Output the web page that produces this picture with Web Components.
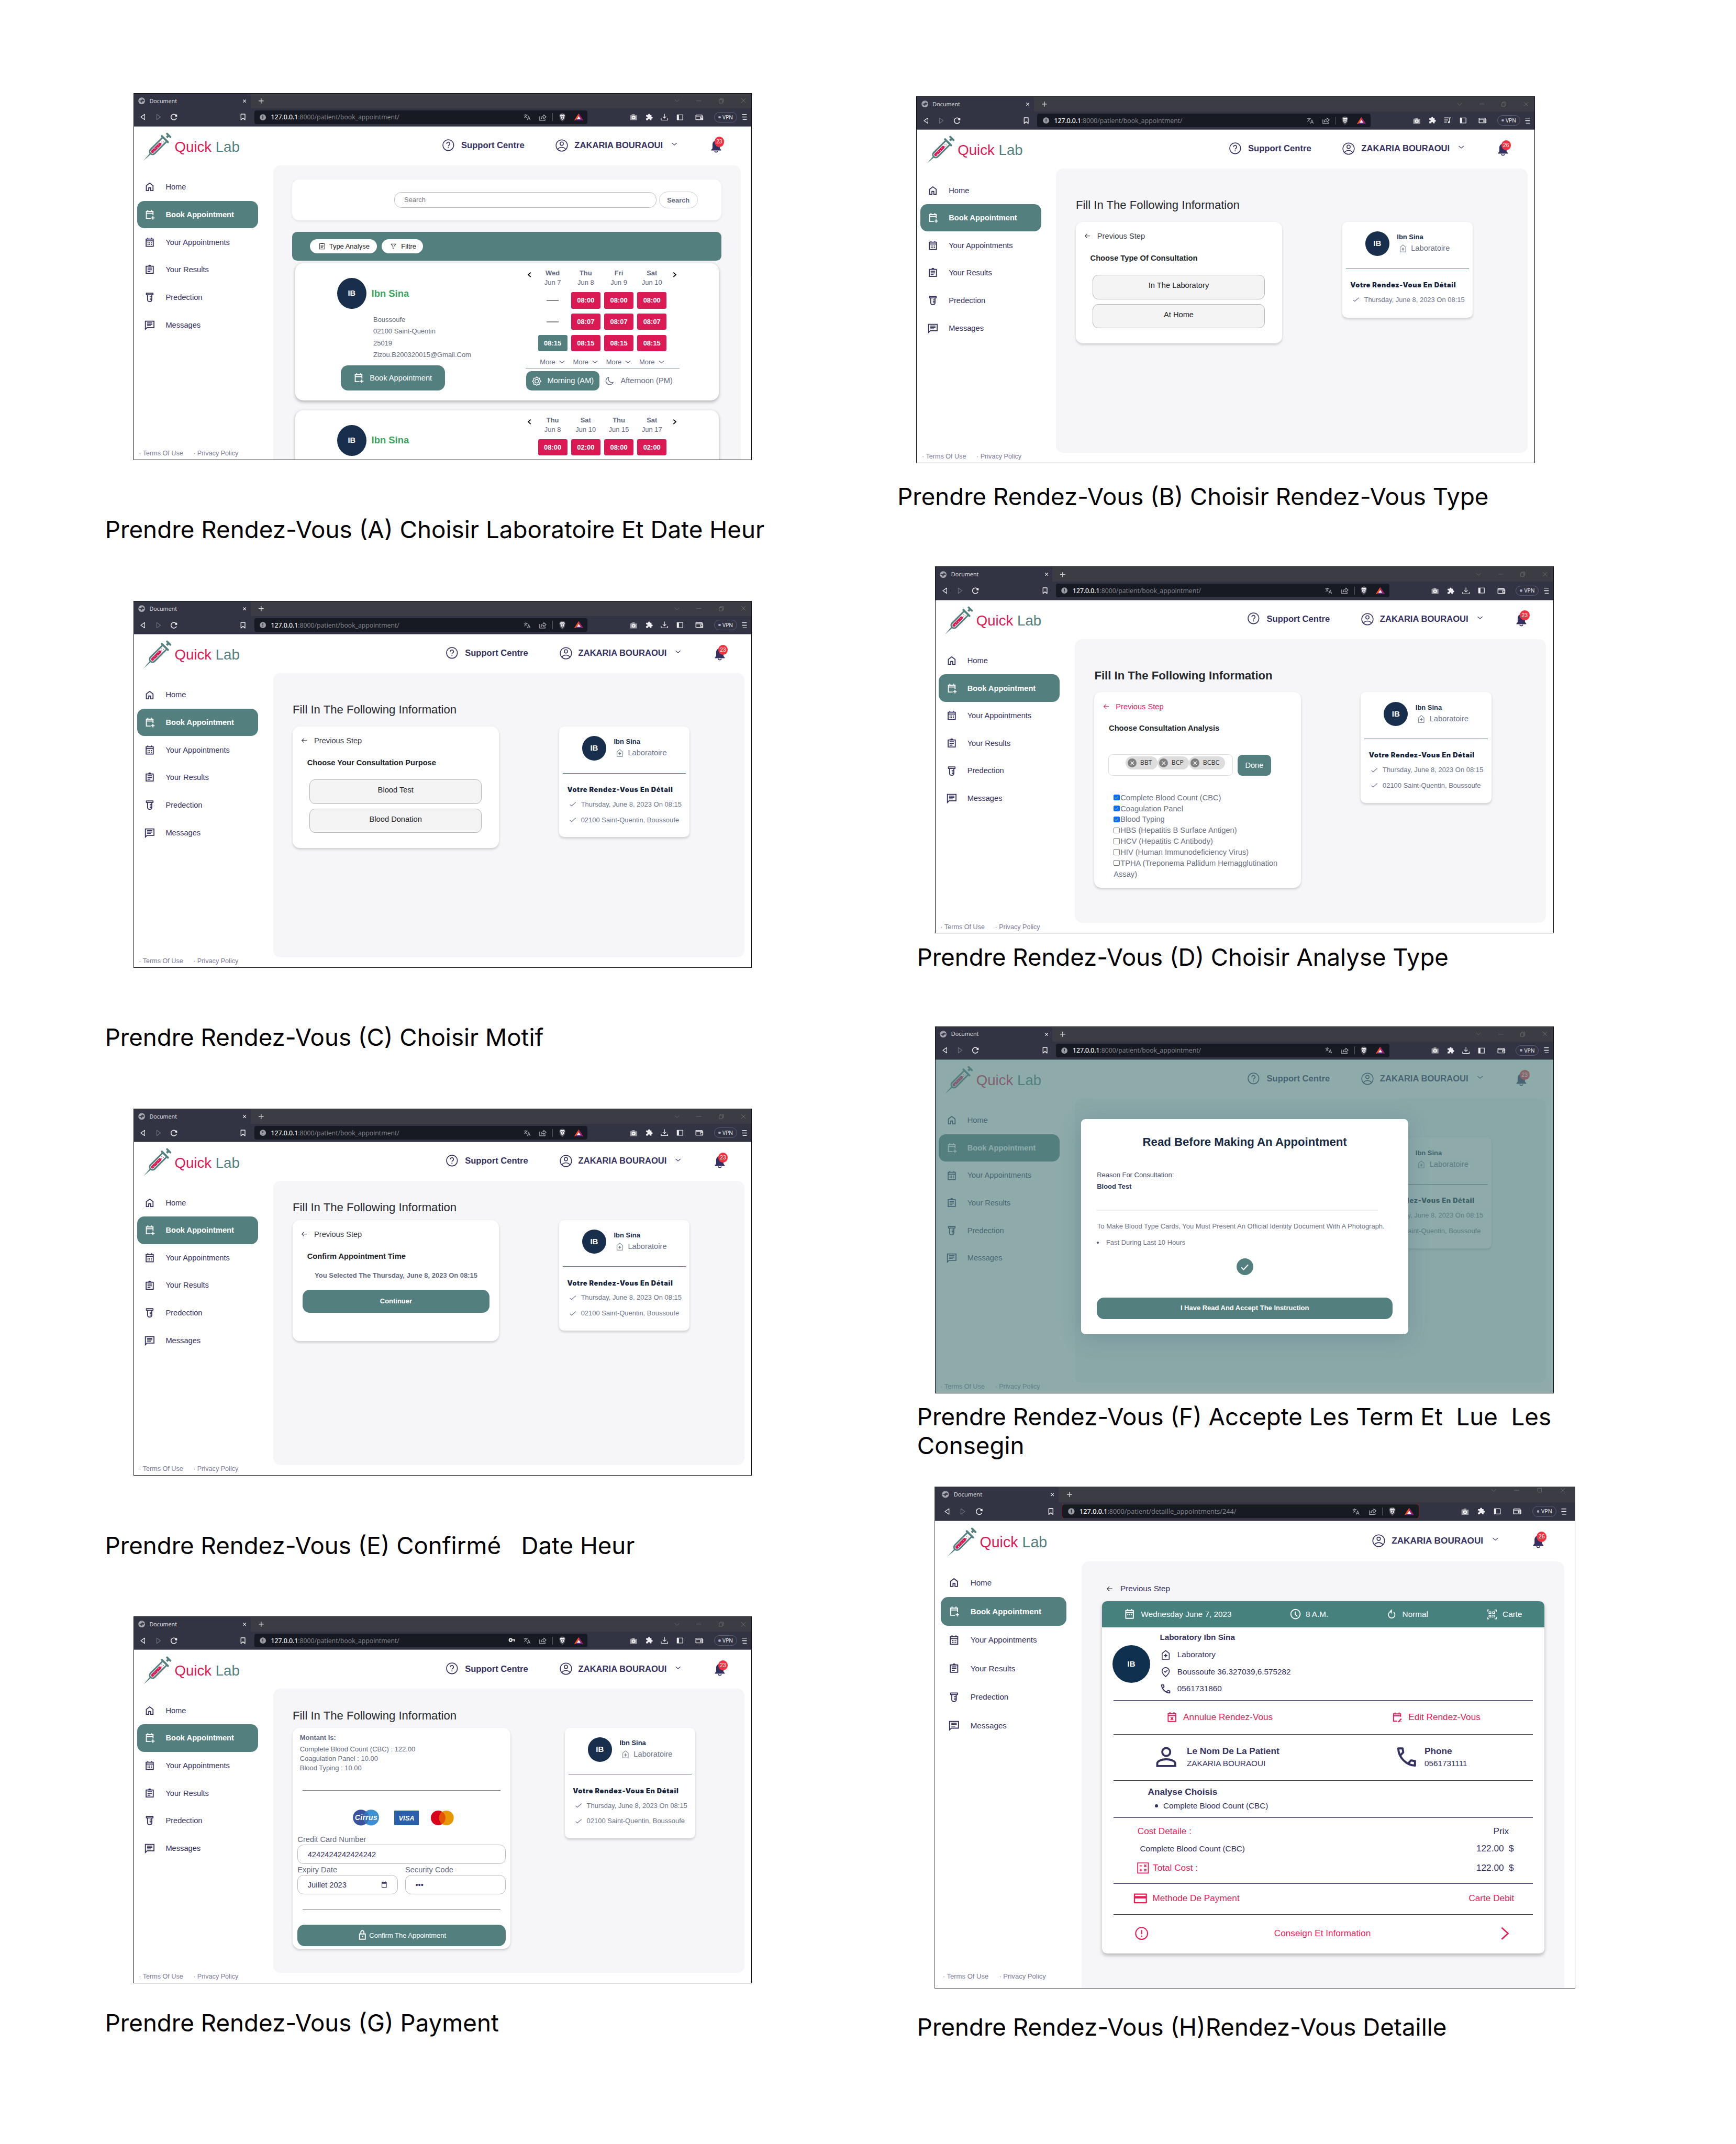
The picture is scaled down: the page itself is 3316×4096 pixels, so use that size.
<!DOCTYPE html>
<html lang="fr">
<head>
<meta charset="utf-8">
<title>Quick Lab – Prendre Rendez-Vous</title>
<style>
html,body{margin:0;padding:0;background:#fff}
body{width:3316px;height:4096px;overflow:hidden;font-family:"Liberation Sans",Arial,sans-serif}
</style>
</head>
<body>
<flow-board></flow-board>
<script>
const BASE = `*{box-sizing:border-box}:host{display:block}p,h1,h2,h3,ul,li{margin:0;padding:0;list-style:none;font-weight:inherit;font-size:inherit}`;
function define(name, css, html) {
  customElements.define(name, class extends HTMLElement {
    connectedCallback() {
      if (this.shadowRoot) return;
      const root = this.attachShadow({ mode: 'open' });
      root.innerHTML = `<style>${BASE}${css}</style>` + (typeof html === 'function' ? html(this) : html);
    }
  });
}
const S = (d, w = 2, extra = '') => `<path d="${d}" fill="none" stroke="currentColor" stroke-width="${w}" ${extra}/>`;
const F = d => `<path d="${d}" fill="currentColor"/>`;
const ICONS = {
  home: F('M6 19h3v-6h6v6h3v-9l-6-4.500L6 10zM4 21V9l8-6 8 6v12h-7v-6h-2v6z'),
  calAdd: S('M19 13.500V5.500H5v14.500h9') + S('M5 9.300h14') + S('M8 2.500v4M16 2.500v4') + S('M18.800 15.500v7M15.300 19h7'),
  calMonth: S('M4.500 5h15v15.500h-15z', 2, 'stroke-linejoin="round"') + S('M4.500 9h15') + S('M8 2.500v3M16 2.500v3') + F('M7.500 12h2v2h-2zM11 12h2v2h-2zM14.500 12h2v2h-2zM7.500 15.700h2v2h-2zM11 15.700h2v2h-2zM14.500 15.700h2v2h-2z'),
  calDots: S('M4.500 5h15v15.500h-15z', 2, 'stroke-linejoin="round"') + S('M4.500 9h15') + S('M8 2v3M16 2v3') + F('M7.500 12h2v2h-2zM11 12h2v2h-2zM14.500 12h2v2h-2z'),
  calX: S('M4.500 5h15v15.500h-15z', 2, 'stroke-linejoin="round"') + S('M4.500 8.800h15') + S('M8 2v3M16 2v3') + S('M9.500 12l5 5.500M14.500 12l-5 5.500', 1.8),
  calEdit: S('M19 11V5.500H5v14.500h7') + S('M5 9.300h14') + S('M8 2.500v4M16 2.500v4') + S('M14.500 21.500l6-6.500', 2.4) + S('M16.500 21h5', 1),
  assignment: S('M4.500 5h15v15h-15z', 2, 'stroke-linejoin="round"') + F('M9 5a3 3 0 0 1 6 0z') + S('M7.500 9h9M7.500 12.500h9M7.500 16h6', 1.9),
  tube: S('M5 3.500h14v3.200H5z', 1.9, 'stroke-linejoin="round"') + S('M7.500 7v10a4 4 0 0 0 4 4h1a4 4 0 0 0 4-4V7') + S('M12 11h4M12 14h4M12 17h4', 1.6),
  chat: S('M3 21V4h18v13.500H6.500z', 2, 'stroke-linejoin="miter"') + S('M6.500 7.500h11M6.500 10.500h11M6.500 13.500h8', 1.8),
  help: '<circle cx="12" cy="12" r="9.300" fill="none" stroke="currentColor" stroke-width="1.400"/>' + S('M9.300 9.800a2.700 2.700 0 1 1 3.900 2.200c-.9.500-1.200 1-1.200 2', 1.4) + F('M11.200 15.600h1.600v1.700h-1.600z'),
  user: '<circle cx="12" cy="12" r="9.300" fill="none" stroke="currentColor" stroke-width="1.300"/><circle cx="12" cy="9" r="2.700" fill="none" stroke="currentColor" stroke-width="1.300"/>' + S('M5.300 18.200c1.800-2.300 4-3.200 6.700-3.200s4.900.9 6.700 3.200', 1.3),
  chevron: S('M3 7.500l9 9 9-9', 2.6),
  bell: F('M12 2.200c-4.300.3-7 3.200-7 7.300V16l-2.500 3v1h19v-1L19 16V9.500c0-4.100-2.700-7-7-7.300zM8.500 20.500a3.500 3 0 0 0 7 0h-1.500a2 1.500 0 0 1-4 0z'),
  filter: S('M4.500 5h15l-6 7.500V19h-3v-6.500z', 1.6, 'stroke-linejoin="round"'),
  list: S('M5 5h14v15H5z', 1.5) + S('M9 5V3.500h6V5M8 9.500h8M8 12.500h8M8 15.500h6', 1.5),
  left: S('M15.500 4.500L8 12l7.500 7.500', 3),
  right: S('M8.500 4.500L16 12l-7.500 7.500', 3),
  thinRight: S('M8 3.500L16.500 12 8 20.500', 2),
  arrow: S('M21.500 12H3M11.500 3.500L3 12l8.500 8.500', 2.2),
  check: S('M2.500 13.500l5.500 5.500L21.500 5', 2),
  tick: S('M4.500 12.500l5 5L19.500 7', 2.4),
  sun: S('M12 2.500l2.800 2.800h3.900v3.900L21.500 12l-2.800 2.800v3.900h-3.900L12 21.500l-2.800-2.800H5.300v-3.900L2.500 12l2.800-2.800V5.300h3.900z', 1.7) + '<circle cx="12" cy="12" r="4" fill="none" stroke="currentColor" stroke-width="1.700"/>',
  moon: S('M10 3.500a9 9 0 1 0 10.500 12A8.500 8.500 0 0 1 10 3.500z', 1.6, 'stroke-linejoin="round"'),
  lab: S('M5 20.500V9l7-5.500L19 9v11.500z', 1.7) + S('M12 10.200v6.600M8.700 13.500h6.600', 2.2),
  labThin: S('M5 20.500V9l7-5.500L19 9v11.500z', 1.3) + S('M12 10.200v6.600M8.700 13.500h6.600', 1.9),
  pin: S('M12 21.500c-5-5-7.200-8-7.200-11.200a7.200 7.200 0 0 1 14.400 0c0 3.200-2.200 6.200-7.200 11.200z', 1.7) + S('M8.800 10.200l2.400 2.300 4.200-4.300', 1.8),
  phone: F('M19.950 21q-3.130 0-6.180-1.360t-5.550-3.870-3.860-5.540Q3 7.180 3 4.050q0-.45.3-.75t.75-.3H8.100q.35 0 .63.240t.32.560l.65 3.500q.05.400-.03.680t-.27.480L6.980 10.900q.5.930 1.190 1.790t1.510 1.660q.77.780 1.620 1.440t1.800 1.210l2.350-2.350q.22-.22.590-.34t.71-.06l3.450.7q.35.100.580.360t.22.590v4.050q0 .45-.3.750t-.75.300zM6.030 9l1.650-1.650L7.250 5H5.030q.12 1.020.35 2.020T6.030 9zm8.950 8.950q.970.420 1.980.67t2.040.330v-2.200l-2.350-.47z'),
  person: '<circle cx="12" cy="8" r="3.200" fill="none" stroke="currentColor" stroke-width="1.600"/>' + S('M4.800 19.200v-2c0-2 3.800-3.400 7.200-3.400s7.200 1.400 7.200 3.400v2z', 1.6),
  clock: '<circle cx="12" cy="12" r="9.200" fill="none" stroke="currentColor" stroke-width="2"/>' + S('M11.500 7v5.500l4 4', 2),
  rotate: S('M7.500 7a7.300 7.300 0 1 0 9 0', 2) + S('M12.500 1.500L8.500 5.500l4 4M9 5.500h4', 2),
  qr: S('M2 6V2h4M18 2h4v4M22 18v4h-4M6 22H2v-4M6 6h4v4H6zM14 6h4v4h-4zM6 14h4v4H6z', 1.7) + F('M13 13h2.500v2.500H13zM16 16h2.500v2.500H16zM13 17h2v2h-2zM17 13h2v2h-2z'),
  calc: S('M3.500 3.500h17v17h-17z', 1.5) + S('M6.500 8.500h4M13.700 6.500l3.600 3.600M17.300 6.500l-3.600 3.600M6.500 15.500h4.200M8.600 13.400v4.200M13.500 14.300h4M13.500 16.800h4', 1.5),
  card: S('M2.500 5h19v14.500h-19z', 1.9, 'stroke-linejoin="round"') + F('M3 8.200h18v4H3z'),
  alert: '<circle cx="12" cy="12" r="9.300" fill="none" stroke="currentColor" stroke-width="1.700"/>' + S('M12 6.800v6.400M12 15.300v2', 1.8),
  lock: S('M5.500 9.500h13v11h-13z', 2.2) + S('M8.500 9V6a3.500 3.500 0 0 1 7 0v3', 2.2) + F('M10.500 13.500h3v3h-3z'),
  cal: F('M3.500 4h17v17h-17zM5.500 9v10h13V9z') + S('M8 2v3M16 2v3', 2),
  globe: '<circle cx="12" cy="12" r="11.500" fill="#a7a8b0"/><path d="M10 3c4-1 3 1 5 2s-1 3-3 3-2 3-4 3-3 1-6 0c0 2 3 3 5 3s3 3 3 5c2 0 4-2 4-4s3-2 5-1c2-1 2-3 1-5-3 0-5-2-4-4" fill="#3b3d4b"/>',
  x: S('M4 4l16 16M20 4L4 20', 3),
  xThin: S('M3 3l18 18M21 3L3 21', 1.6),
  plus: S('M12 2v20M2 12h20', 3),
  back: S('M19.500 2.500v19L4 12z', 2.4, 'stroke-linejoin="round"'),
  fwd: S('M5 2.500v19L20 12z', 2.4, 'stroke-linejoin="round"'),
  reload: S('M20.500 16a10 10 0 1 1-1-9.500', 2.7) + F('M15.500 4.500l7-1.500.5 8-7.500-1z'),
  bookmark: S('M4.500 2h15v20L12 16l-7.500 6z', 2.7, 'stroke-linejoin="round"'),
  info: '<circle cx="12" cy="12" r="11.500" fill="#9b9ca3"/><path d="M10.600 5.500h2.800v8h-2.800zM10.600 15.500h2.800v2.800h-2.800z" fill="#171a22"/>',
  key: S('M12.500 10.300H23M20 11v5', 3) + '<circle cx="7.500" cy="11" r="4.600" fill="none" stroke="currentColor" stroke-width="3.800"/>',
  translate: S('M1 5h13M7.500 2v3M11 5c-1.500 4.500-4.500 8-9 10.500M4 7.500c1.500 3.500 4 5.500 7.500 7M12.500 22.500L17.500 10l5 12.500M14.200 18.500h6.600', 1.8),
  share: S('M3 9v12.500h16.500V17', 1.9) + S('M7 17c0-6 3-9 8.500-9V4l7 6.500-7 6.500v-4C12 13 9.500 13.500 7 17z', 1.8, 'stroke-linejoin="round"'),
  brave: '<path d="M12 0l8 2.500 2 5-2.500 10L12 24l-7.500-6.500L2 7.500l2-5z" fill="#50505c"/><path d="M7 3.500l5 1 5-1 3 4-3 4 .5 3L12 19l-5.500-4.500.5-3-3-4z" fill="#f3f3f5"/><path d="M6.500 8l3.500 1.200M17.500 8L14 9.200M12 8v6M9.500 14.500l2.500 1.200 2.500-1.200" stroke="#50505c" stroke-width="1.600" fill="none"/>',
  bat: '<path d="M12 1L0 22h3l9-16z" fill="#ff4e1a"/><path d="M12 1v5l9 16h3z" fill="#9e1f63"/><path d="M12 6l9 16H3z" fill="#662d91"/><path d="M12 9l5.500 9.500h-11z" fill="#fff"/><path d="M12 1L0 22l7-4L12 9z" fill="#ff4e1a"/><path d="M12 1l12 21-7-4-5-9z" fill="#a3206a"/>',
  camera: '<path d="M1 6h3V4h4V2h8v4h7v17H1z" fill="#9b9ca0"/><circle cx="12" cy="14" r="4.500" fill="none" stroke="#fff" stroke-width="3"/>',
  puzzle: F('M9 5a3.200 3.200 0 1 1 6 0h5v6a3 3 0 1 1 0 5.500V22h-5.500a3 3 0 1 0-5.500 0H2v-6.500a3 3 0 1 0 0-5V5z'),
  download: S('M12 1v14M6.500 10L12 15.500 17.500 10M1.500 16v6h21v-6', 2),
  queue: S('M1.500 4h14M1.500 11h12M1.500 18h8M18.500 18V4h4.500', 2.5) + '<circle cx="16" cy="18.500" r="3.200" fill="currentColor"/>',
  side: S('M2.500 2.500h19v19h-19z', 2.2) + F('M2.500 2.500h6v19h-6z'),
  wallet: S('M2 4.500h18v4M2 4.500v16h20v-12H2', 2.300, 'stroke-linejoin="round"') + S('M22.500 12h-7v5h7', 2),
  burger: S('M3 3h20M3 12h20M6 21h17', 2.6),
  chevThin: S('M2 6l10 12L22 6', 1.5),
  minus: S('M0 12h24', 1.6),
  restore: S('M2 6.500h15V23H2zM6.500 6V2h15v16h-3.500', 1.6),
  square: S('M3 3h18v18H3z', 1.6)
};
define('ui-icon', ':host{display:inline-block;flex:none;line-height:0;vertical-align:top}svg{display:block;width:100%;height:100%;overflow:visible}', h => {
  const s = h.getAttribute('s') || 24;
  h.style.width = (h.getAttribute('w') || s) + 'px';
  h.style.height = s + 'px';
  return `<svg viewBox="0 0 24 24" preserveAspectRatio="none">${ICONS[h.getAttribute('name')]}</svg>`;
});
const ic = (n, s, w) => `<ui-icon name="${n}" s="${s}" ${w ? `w="${w}"` : ''}></ui-icon>`;

/* Scales its single line of text so that it spans the given width. */
customElements.define('fit-line', class extends HTMLElement {
  connectedCallback() {
    if (this.shadowRoot) return;
    const root = this.attachShadow({ mode: 'open' }), w = this.getAttribute('w');
    root.innerHTML = `<style>:host{display:block;white-space:pre}div{width:${w}px}</style><div><span><slot></slot></span></div>`;
    const box = root.querySelector('div'), span = root.querySelector('span');
    const ratio = box.getBoundingClientRect().width / span.getBoundingClientRect().width;
    if (this.hasAttribute('track')) {
      const z = box.getBoundingClientRect().width / w;
      span.style.letterSpacing = (w - span.getBoundingClientRect().width / z) / this.textContent.length + 'px';
    } else span.style.fontSize = parseFloat(getComputedStyle(this).fontSize) * ratio + 'px';
  }
});

define('quick-logo', `:host{display:flex;align-items:flex-start;font-size:40.500px;line-height:44px;color:#db1a55;white-space:pre}
svg{width:77px;height:77px;margin-right:10px;overflow:visible}span{margin-top:16.200px}b{font-weight:400;color:#53807e}`,
`<svg viewBox="0 0 77 77"><g transform="translate(0,76) rotate(-45)" fill="none" stroke="#53807e" stroke-linecap="round">
<path d="M0 0L30-2.200V2.200z" fill="#53807e" stroke="none"/>
<path d="M84-8H36a8 8 0 0 0 0 16h48" stroke-width="4.400" stroke-linecap="butt"/>
<path d="M85-12v24" stroke-width="5.500"/><path d="M92 0h7" stroke-width="6" stroke-linecap="butt"/><path d="M100-6.500v13" stroke-width="5.500"/>
<path d="M36 0h29" stroke="#db1a55" stroke-width="8.600"/>
<g fill="#fff" stroke="none"><circle cx="40" cy="2" r="1.300"/><circle cx="47" cy="-1.500" r="1.100"/><circle cx="53" cy="1.500" r="1.200"/><circle cx="61" cy="-1" r="1"/></g>
<g fill="#db1a55" stroke="none"><circle cx="71" cy="1.500" r="1.100"/><circle cx="75" cy="-2.500" r="1.100"/><circle cx="77" cy="2.500" r="1"/></g>
</g></svg><span>Quick <b>Lab</b></span>`);

define('browser-chrome', `:host{font-family:"Open Sans","Noto Sans",sans-serif;color:#fff;background:#323443}
.tabs{display:flex;height:41px;background:#3c3c44;padding-left:var(--inset,0px);box-shadow:inset 7px 0 #323443}
.tab{display:flex;align-items:center;width:327px;background:#323443;padding:0 11px 0 12px;border-radius:0 5px 0 0}
.tab fit-line{margin-left:12.300px;font-size:15.500px;color:#e3e3e6;line-height:20px}
.tab ui-icon:last-child{margin-left:auto}
.plus{margin:12px 0 0 20.500px;color:#cfcfd2}
.ctl{display:flex;align-items:center;gap:16px;margin-left:auto;color:#85858a;height:40px;padding-right:var(--rin,0px)}
.ctl i{width:46px;display:flex;justify-content:center}
.bar{display:flex;align-items:center;height:50px;padding-left:var(--inset,0px)}
.nav{width:336.700px;display:flex;align-items:center;padding-left:17px;color:#f0f0f2}
.nav span,.key{line-height:0}
.nav .f{opacity:.3;margin:0 26px 0 26px}.nav .b{margin-left:auto;margin-right:22px}
.url{display:flex;align-items:center;width:var(--urlw,933px);height:38px;border-radius:6px;background:#171a22;padding:0 13px 0 15px;color:#b4b5ba;font-size:17.500px}
.url.warn{box-shadow:0 0 0 1.500px #8c3324}
.url fit-line{margin-left:14px;color:#86878d}.url b{font-weight:400;color:#fff;-webkit-text-stroke:.3px #fff}
.act{margin-left:auto;display:flex;align-items:center}.act s{width:1.500px;height:22px;background:#55565d;margin:0 15px 0 16px}
.key{margin-right:23px;color:#eee}
.ext{display:flex;align-items:center;margin-left:auto;padding-right:calc(12px + var(--rin,0px));color:#f0f0f2}
.ext i{width:43.500px;display:flex;justify-content:center}.ext .w{margin-left:11px}
.vpn{display:flex;align-items:center;justify-content:center;gap:5px;width:64.600px;height:29px;border:1.500px solid #5a5d78;border-radius:15px;margin:0 12px 0 19px;font-size:15px}
.vpn::before{content:"";width:7px;height:7px;border-radius:50%;background:#a8a9c4}
.edge{height:1px;background:#777a8b}`,
h => `<div class="tabs"><div class="tab">${ic('globe', 19.5)}<fit-line w="77">Document</fit-line>${ic('x', 12)}</div><span class="plus">${ic('plus', 17)}</span>
<div class="ctl" ${h.hasAttribute('small') ? 'style="height:18px"' : ''}><i>${ic('chevThin', 12, 15)}</i><i>${ic('minus', 14)}</i><i>${ic(h.hasAttribute('small') ? 'square' : 'restore', 14)}</i><i>${ic('xThin', 15)}</i></div></div>
<div class="bar"><div class="nav">${ic('back', 19, 17)}<span class="f">${ic('fwd', 19, 17)}</span>${ic('reload', 19)}<span class="b">${ic('bookmark', 19, 18)}</span></div>
<div class="url ${h.hasAttribute('small') ? 'warn' : ''}">${ic('info', 18)}<fit-line w="${h.getAttribute('uw') || 359}"><b>127.0.0.1</b>:8000${h.getAttribute('path')}</fit-line>
<div class="act">${h.hasAttribute('key') ? `<span class="key">${ic('key', 20)}</span>` : ''}${ic('translate', 19, 20)}<span style="width:23px"></span>${ic('share', 21, 22)}<s></s>${ic('brave', 24, 21)}<span style="width:23px"></span>${ic('bat', 22, 25)}</div></div>
<div class="ext"><i>${ic('camera', 19, 21)}</i><i>${ic('puzzle', 20)}</i>${h.hasAttribute('small') ? '' : `<i>${ic(h.hasAttribute('queue') ? 'queue' : 'download', 20, 21)}</i>`}<i>${ic('side', 18, 20)}</i><i class="w">${ic('wallet', 20, 23)}</i><span class="vpn">VPN</span>${ic('burger', 19, 16)}</div></div>
<div class="edge"></div>`);

define('browser-window', `:host{width:1728px;height:1024px;overflow:hidden;background:#fff;outline:1.400px solid #111;outline-offset:-1px;position:relative;display:flex;flex-direction:column}`, '<slot></slot>');

define('lab-app', `:host{flex:1;display:flex;flex-direction:column;color:#343160;min-height:0;position:relative;padding-left:var(--inset,0px)}
header{flex:none;height:109px;display:grid;grid-template-columns:calc(860px + var(--shift,10.500px)) 56px 261.500px 55.500px 270.500px 108px auto;font-weight:700;font-size:24.300px;line-height:30px;white-space:nowrap}
:host([scrolls]) header{--shift:0px}
header>*{margin-top:39px}header>quick-logo{margin:20px 0 0 27px;font-weight:400}
header>.i1{margin-top:32.500px}header>.i2{margin-top:33px}header>.ch{margin-top:42px}
header>.bell{position:relative;margin-top:36px;width:36px}
.bell span{position:absolute;left:13px;top:-7px;width:27px;height:28px;border-radius:50%;background:#f5303f;color:#fff;font:400 15px/28px "Liberation Sans";text-align:center}
main{flex:1;display:flex;min-height:0}
aside{width:389.500px;display:flex;flex-direction:column;padding-top:22px;flex:none}:host([nosupport]) aside{padding-top:19.500px}
li{display:flex;align-items:center;gap:28px;height:77.100px;width:338.500px;margin-left:9px;padding-left:20px;font-size:21.500px;border-radius:20px}
li.on{background:#53807e;color:#fff;font-weight:700}
footer{margin-top:auto;height:33.500px;display:flex;font-size:18.500px;line-height:35px;color:#7b7a99;padding-left:14px;white-space:pre}
:host([nosupport]) footer{margin-bottom:14px;line-height:33px}
footer span{width:152.300px}
section{flex:1;background:#f6f6f9;border-radius:20px;margin-right:19.500px;margin-bottom:28px;overflow:hidden}
:host([tall]) section{margin-bottom:0;border-radius:20px 20px 0 0;margin-right:30.500px}:host([nosupport]) section{margin-right:29px}`,
h => {
  const nav = [['home', 'Home'], ['calAdd', 'Book Appointment'], ['calMonth', 'Your Appointments'], ['assignment', 'Your Results'], ['tube', 'Predection'], ['chat', 'Messages']];
  return `<header><quick-logo></quick-logo>${h.hasAttribute('nosupport') ? '<i></i><i></i>' : `<span class="i1">${ic('help', 39)}</span><span>Support Centre</span>`}
<span class="i2">${ic('user', 41)}</span><span>ZAKARIA BOURAOUI</span><span class="ch">${ic('chevron', 15, 18)}</span><span class="bell">${ic('bell', 38, 35)}<span>${h.getAttribute('badge') || 23}</span></span></header>
<main><aside><ul>${nav.map((n, i) => `<li class="${i == 1 ? 'on' : ''}">${ic(n[0], 32)}<span>${n[1]}</span></li>`).join('')}</ul>
<footer><span>· Terms Of Use</span><span>· Privacy Policy</span></footer></aside><section><slot></slot></section></main><slot name="over"></slot>`;
});

define('time-grid', `:host{display:grid;grid-template-columns:repeat(4,81.700px);column-gap:10.900px;font-size:19px;text-align:center;color:#646b80}
.d{line-height:26px;height:65.700px}.d b{display:block}
.s{height:46.300px;margin-bottom:13.300px;border-radius:5px;background:#db1a55;color:#fff;font-weight:700;line-height:47px}
.s.g{background:#53807e}.s.n{background:none;display:flex;align-items:center;justify-content:center}.s.n::before{content:"";width:33.500px;border-top:3px solid #868686}
.m{display:flex;align-items:center;justify-content:center;gap:9px;line-height:34px;height:33px}`,
h => h.getAttribute('days').split(',').map(d => { const [a, b] = d.split('|'); return `<div class="d"><b>${a}</b>${b}</div>`; }).join('') +
  h.getAttribute('slots').split(',').map(s => s == '-' ? '<div class="s n"></div>' : `<div class="s ${s[0] == '*' ? 'g' : ''}">${s.replace('*', '')}</div>`).join('') +
  (h.hasAttribute('nomore') ? '' : `<div class="m">More ${ic('chevron', 16, 19)}</div>`.repeat(4)));

define('lab-result', `:host{display:flex;background:#fff;border-radius:22px;box-shadow:0 4px 9px rgba(0,0,0,.28);height:383.500px;width:1186px;margin-left:7.500px;font-size:19px;color:#646b80}
.who{width:645px;padding:40.500px 0 0 118px}
.top{display:flex;align-items:center;gap:14.500px;color:#3aa55d;font-weight:700;font-size:27px}
.av{width:81.500px;height:87px;border-radius:50%;background:#182e4d;color:#fff;font-size:21.500px;text-align:center;line-height:87px}
address{font-style:normal;line-height:32.600px;margin:14px 0 0 101px}
.btn{display:flex;align-items:center;gap:15px;background:#53807e;color:#fff;border-radius:20px;height:70.500px;width:292px;margin:13.500px 0 0 9.500px;padding-left:34.500px;font-size:21.500px}
.cal{padding-top:14.500px;width:431px}
.days{display:flex;color:#000;gap:0}
.days ui-icon{margin-top:7.500px}.days time-grid{margin:0 12px 0 13px}
.half{display:flex;border-top:1.500px solid #7d9fa0;padding-top:8px;font-size:21.500px;line-height:54.500px;align-items:center;margin-left:0;white-space:nowrap}
.am{display:flex;align-items:center;gap:14px;background:#53807e;color:#fff;border-radius:15px;height:54.500px;width:206px;padding-left:16px;margin:0 15px 0 1px}
.pm{display:flex;align-items:center;gap:16px}`,
h => `<div class="who"><div class="top"><span class="av">IB</span>Ibn Sina</div>${h.hasAttribute('short') ? '' : `<address>Boussoufe<br>02100 Saint-Quentin<br>25019<br>Zizou.B200320015@Gmail.Com</address><div class="btn">${ic('calAdd', 32)}Book Appointment</div>`}</div>
<div class="cal"><div class="days">${ic('left', 20, 22)}<time-grid ${h.hasAttribute('short') ? 'nomore' : ''} days="${h.getAttribute('days')}" slots="${h.getAttribute('slots')}"></time-grid>${ic('right', 20, 22)}</div>
${h.hasAttribute('short') ? '' : `<div class="half"><span class="am">${ic('sun', 30)}Morning (AM)</span><span class="pm">${ic('moon', 28)}Afternoon (PM)</span></div>`}</div>`);

define('lab-search', `:host{padding:40px 0 0 54px}
.find{width:1200px;height:113.500px;background:#fff;border-radius:20px;box-shadow:0 2px 6px rgba(40,40,120,.1);display:flex;align-items:center;padding-left:284.500px;gap:6px;font-size:18.900px}
.in{width:735px;height:43px;border:1.500px solid #b9bac2;border-radius:20px;line-height:42px;padding-left:27px;color:#75757c}
.go{width:109px;height:48px;border:1.500px solid #c9cad6;border-radius:24px;text-align:center;line-height:46px;font-weight:700;color:#646b80}
.bar{width:1200px;height:80.500px;margin:32.500px 0 8px;background:#53807e;border-radius:14px;display:flex;align-items:center;padding-left:48.500px;gap:13.500px;font-size:19px;color:#222}
.bar span{display:flex;align-items:center;height:40.500px;background:#fff;border-radius:21px;gap:8.500px;padding-left:22px;width:187.500px}.bar span+span{width:115.500px;gap:10px;padding-left:23px}
.bar ui-icon{color:#444}
lab-result+lab-result{margin-top:27.500px}`,
`<div class="find"><div class="in">Search</div><div class="go">Search</div></div>
<div class="bar"><span>${ic('list', 24)}Type Analyse</span><span>${ic('filter', 22)}Filtre</span></div>
<lab-result days="Wed|Jun 7,Thu|Jun 8,Fri|Jun 9,Sat|Jun 10" slots="-,08:00,08:00,08:00,-,08:07,08:07,08:07,*08:15,08:15,08:15,08:15"></lab-result>
<lab-result short days="Thu|Jun 8,Sat|Jun 10,Thu|Jun 15,Sat|Jun 17" slots="08:00,02:00,08:00,02:00"></lab-result>`);

define('visit-summary', `:host{width:365px;background:#fff;border-radius:14px;box-shadow:0 4px 6px rgba(0,0,0,.16);color:#6b7488;font-size:19px;padding-bottom:27px;height:310px;flex:none}
:host([one]){height:268px}
.top{display:flex;padding:27px 0 0 64px;height:130px}
.av{width:68px;height:68px;border-radius:50%;background:#182e4d;color:#fff;font-weight:700;font-size:22px;text-align:center;line-height:68px;margin-right:21px}
.n{color:#182e4d;font-weight:700;line-height:31px}
.l{display:flex;align-items:center;gap:10px;font-size:21.500px;line-height:33px;padding-left:3.500px}
.hr{border-top:1.500px solid #53807e;margin:0 10px}
h3{font-weight:900;font-family:Inter,sans-serif;color:#14233c;font-size:18.800px;line-height:30px;margin:31px 0 3px 22.500px}
p{display:flex;align-items:center;gap:12px;height:43.700px;padding-left:28px;white-space:nowrap}`,
h => `<div class="top"><span class="av">IB</span><div><div class="n">Ibn Sina</div><div class="l">${ic('labThin', 28, 26)}Laboratoire</div></div></div><div class="hr"></div>
<h3><fit-line track w="296">Votre Rendez-Vous En Détail</fit-line></h3><p>${ic('check', 18, 21)}Thursday, June 8, 2023 On 08:15</p>${h.hasAttribute('one') ? '' : `<p>${ic('check', 18, 21)}02100 Saint-Quentin, Boussoufe</p>`}`);

define('wizard-step', `:host{padding:82px 0 0 55px}:host([high]){padding-top:54.500px}
h2{font-size:32.400px;line-height:40px;color:#25282d;margin-bottom:27px;white-space:nowrap}:host([high]) h2{margin-bottom:14.500px}:host([bold]) h2{font-weight:700}
.row{display:flex;align-items:flex-start;gap:168px}:host([pay]) .row{gap:152px}`,
h => `<h2>Fill In The Following Information</h2><div class="row"><slot></slot><visit-summary ${h.hasAttribute('one') ? 'one' : ''}></visit-summary></div>`);

const CARD = `:host{width:577.500px;background:#fff;border-radius:20px;box-shadow:0 4px 6px rgba(0,0,0,.16);flex:none;color:#212529;font-size:21.500px}
.prev{display:flex;align-items:center;gap:18px;height:40px;padding-left:24px;padding-top:0;color:#3b4048}
h3{font-weight:700;line-height:30px;margin:26.500px 0 0 40.500px;white-space:nowrap}`;
const prev = `<div style="height:20px"></div><div class="prev">${ic('arrow', 17, 18)}Previous Step</div>`;

define('choice-card', CARD + `:host{height:340px}.b{width:482px;height:68px;margin:32px 0 0 47px;border:1.500px solid #b5b5b5;border-radius:16px;background:#f4f4f4;text-align:center;line-height:58px}.b+.b{margin-top:13.700px}`,
h => prev + `<h3>${h.getAttribute('heading')}</h3>` + h.getAttribute('options').split('|').map(o => `<div class="b">${o}</div>`).join(''));

define('confirm-card', CARD + `:host{height:339px}p{font-weight:700;font-size:19px;color:#646b80;text-align:center;line-height:30px;margin:24px 0 25.500px 1px}.b{width:524px;height:64px;margin-left:27px;border-radius:20px;background:#53807e;color:#fff;font-weight:700;font-size:19px;text-align:center;line-height:65px}`,
prev + `<h3>Confirm Appointment Time</h3><p>You Selected The Thursday, June 8, 2023 On 08:15</p><div class="b">Continuer</div>`);

define('analysis-card', CARD + `:host{height:547.500px}.prev{color:#e01c5b}
.pick{display:flex;align-items:flex-start;gap:13px;margin:57.500px 0 46px 39.500px}
.in{display:flex;width:348px;height:60.500px;border:1.500px solid #dcdcdc;border-radius:12px;padding:5px 0 0 47px}
.in span{display:flex;align-items:center;width:88px;height:36px;background:#ddd;border-radius:18px;font:18px/36px "Open Sans",sans-serif;color:#333;padding-left:5px;gap:10px}.in span:last-child{width:102px}
.in i{width:25px;height:25px;border-radius:50%;background:#808080;color:#fff;display:flex;align-items:center;justify-content:center}
.done{width:94px;height:58px;margin-top:2px;border-radius:13px;background:#53807e;color:#fff;text-align:center;line-height:59px}
ul{padding-left:54px;color:#6b7182;line-height:30.500px}
li i{display:inline-block;overflow:hidden;width:16.500px;height:16.500px;border:1.500px solid #767676;border-radius:3px;margin-right:2.500px;vertical-align:-1px;background:#fff;color:#fff;line-height:0}
li i.c{background:#0a6cf5;border-color:#0a6cf5}li{width:480px}`,
prev + `<h3>Choose Consultation Analysis</h3><div class="pick"><div class="in">${['BBT', 'BCP', 'BCBC'].map(t => `<span><i>${ic('x', 14)}</i>${t}</span>`).join('')}</div><div class="done">Done</div></div>
<ul>${['*Complete Blood Count (CBC)', '*Coagulation Panel', '*Blood Typing', 'HBS (Hepatitis B Surface Antigen)', 'HCV (Hepatitis C Antibody)', 'HIV (Human Immunodeficiency Virus)', 'TPHA (Treponema Pallidum Hemagglutination Assay)'].map(t => `<li><i class="${t[0] == '*' ? 'c' : ''}">${t[0] == '*' ? ic('tick', 13.5) : ''}</i>${t.replace('*', '')}</li>`).join('')}</ul>`);

define('blank-card', CARD + ':host{height:339px}', '');

define('payment-card', CARD + `:host{width:609.500px;height:619px;color:#646b80;padding:13px 13.500px 0}
.sum{font-size:19px;line-height:26.400px;padding-left:6.500px;white-space:nowrap}.sum b{display:block;line-height:29px;margin-bottom:5px}
.hr{border-top:1.500px solid #777;margin:49px 14px 0}
.logos{display:flex;align-items:center;gap:0;height:150px;padding:0 0 0 154.500px}
.logos svg{display:block;overflow:visible}
label{display:block;line-height:29px}
.f{height:54px;border:1.500px solid #b9b9bd;border-radius:17px;padding:0 27px;line-height:53px;color:#343160;background:#fff}
.two{display:flex;gap:20px;margin-top:2px}.two>div{flex:1}
.two .f{display:flex;justify-content:space-between;align-items:center}
.b{display:flex;align-items:center;justify-content:center;gap:4px;height:59.500px;margin-top:41px;border-radius:20px;background:#53807e;color:#fff;font-size:19px;padding-left:0}`,
`<div class="sum"><b>Montant Is:</b>Complete Blood Count (CBC) : 122.00<br>Coagulation Panel : 10.00<br>Blood Typing : 10.00</div><div class="hr"></div>
<div class="logos"><svg width="74" height="45" viewBox="0 0 74 45"><circle cx="51" cy="22.500" r="22.300" fill="#3b8fd2"/><circle cx="22.500" cy="22.500" r="22.300" fill="#3a54a0"/><path d="M37 5.500a22.300 22.300 0 0 1 0 34a22.300 22.300 0 0 1 0-34z" fill="#3773b9"/><text x="37" y="29" text-anchor="middle" font-family="Liberation Sans" font-weight="700" font-style="italic" font-size="20.500" textLength="63" fill="#fff">Cirrus</text></svg>
<svg style="margin-left:42px" width="69" height="41" viewBox="0 0 69 41"><rect width="69" height="41" rx="2" fill="#2a5fac"/><text x="34.500" y="27.500" text-anchor="middle" font-family="Liberation Sans" font-weight="700" font-style="italic" font-size="19" textLength="44" fill="#fff">VISA</text></svg>
<svg style="margin-left:34px" width="64" height="41" viewBox="0 0 64 41"><circle cx="20.500" cy="20.500" r="20.500" fill="#d9001b"/><circle cx="43.500" cy="20.500" r="20.500" fill="#e79800"/><path d="M32 3.500a20.500 20.500 0 0 1 0 34a20.500 20.500 0 0 1 0-34z" fill="#e35205"/></svg></div>
<div style="margin-top:-28px"><label>Credit Card Number</label><div class="f">4242424242424242</div></div>
<div class="two"><div><label>Expiry Date</label><div class="f">Juillet 2023 ${ic('cal', 22, 20)}</div></div><div><label>Security Code</label><div class="f">•••</div></div></div>
<div class="hr" style="margin-top:42px"></div><div class="b">${ic('lock', 32, 30)}Confirm The Appointment</div>`);

define('read-dialog', `:host{position:absolute;inset:0;background:rgba(83,128,126,.66);padding:166px 0 0 407.500px}
.m{width:915.500px;height:602px;background:#fff;border-radius:12px;box-shadow:0 10px 60px rgba(40,80,110,.22);padding:44px 44px 0;color:#6a7085;font-size:19px}
h2{font-size:32.500px;font-weight:700;color:#182a45;text-align:center;line-height:40px;margin-bottom:57px;white-space:nowrap}
.r{color:#3f4a66;line-height:32.500px}.r b{display:block;color:#2b3a5a}
.hr{height:2px;width:786px;background:#ededf0;margin:48px 0 28px}
.p{line-height:32px;white-space:nowrap;padding-left:1px}
li{line-height:32px;margin-top:14px;display:flex;align-items:center;gap:20px}li::before{content:"";width:6px;height:6px;border-radius:50%;background:#4b5470}
.c{width:47px;height:47px;border-radius:50%;background:#53807e;color:#fff;margin:28.500px auto 62px;display:flex;align-items:center;justify-content:center}
.b{height:60px;border-radius:20px;background:#53807e;color:#fff;text-align:center;line-height:60px;font-weight:700}`,
`<div class="m"><h2>Read Before Making An Appointment</h2><div class="r">Reason For Consultation:<b>Blood Test</b></div><div class="hr"></div><p class="p">To Make Blood Type Cards, You Must Present An Official Identity Document With A Photograph.</p><ul><li>Fast During Last 10 Hours</li></ul><div class="c">${ic('tick', 31)}</div><div class="b">I Have Read And Accept The Instruction</div></div>`);

define('visit-detail', `:host{zoom:.965251;padding:55px 0 0 57px;color:#343160;font-size:22.400px}
.prev{display:flex;align-items:center;gap:21px;height:44px;padding-left:11px;margin-bottom:13px}
.prev ui-icon{color:#444}
.card{width:1237px;background:#fff;border-radius:14px;box-shadow:0 5px 9px rgba(0,0,0,.25);height:985px;overflow:visible}
.bar{height:73.500px;background:#47817e;color:#fff;border-radius:14px 14px 0 0;display:grid;grid-template-columns:463.500px 271.500px 279.500px auto;padding-left:60px}
.bar span{display:flex;align-items:center;gap:15px;height:72px}.bar .n{gap:12px}
.in{padding:0 32px}
.row{display:flex;border-bottom:2px solid #343160;white-space:nowrap}
.row>*{flex:none}
.pink{color:#ea1d57;font-size:25.200px}b{font-size:25.200px}
.lab{height:205px}.av{width:106px;height:106px;border-radius:50%;background:#10304f;color:#fff;font-weight:700;font-size:22.500px;text-align:center;line-height:106px;margin:49px 0 0 -3.500px}
.inf{margin-left:27px}.inf b{display:block;font-size:22.400px;line-height:48px;margin-top:4px}.inf div{display:flex;align-items:center;gap:15px;height:47.800px}
.act{height:94px;align-items:center;padding:0 0 0 147px}.act span{display:flex;align-items:center;gap:14px;width:630px}
.act span+span{width:auto}
.pat{height:129px;padding:0 0 0 105px;align-items:center}.pat>span{display:flex;align-items:center;gap:16px;line-height:33px}
.ana{height:104px;padding:15px 0 0 96px;flex-direction:column}.ana b{line-height:33px}.ana li{line-height:46px;padding-left:43px;position:relative;display:flex;align-items:center}.ana li::before{content:"";position:absolute;left:20px;width:8px;height:8px;border-radius:50%;background:#343160}
.cost{height:185px;flex-direction:column;padding:13px 53px 0 67px}.cost>div{display:flex;align-items:center;justify-content:space-between;height:49px}.cost .v{font-size:25.200px;white-space:pre}.cost span{display:flex;align-items:center}
.pay{height:87px;align-items:center;justify-content:space-between;padding:0 52px 4px 54px}.pay span{display:flex;align-items:center;gap:13px}
.end{border:0;height:104px;align-items:center;padding:0 54px 0 57px;justify-content:space-between}`,
`<div class="prev">${ic('arrow', 18, 19)}Previous Step</div><div class="card"><div class="bar"><span>${ic('calDots', 34)}Wednesday June 7, 2023</span><span class="n">${ic('clock', 34, 34)}8 A.M.</span><span>${ic('rotate', 30)}Normal</span><span>${ic('qr', 30, 31)}Carte</span></div>
<div class="in"><div class="row lab"><span class="av">IB</span><div class="inf"><b>Laboratory Ibn Sina</b><div>${ic('lab', 34, 34)}Laboratory</div><div>${ic('pin', 33, 34)}Boussoufe 36.327039,6.575282</div><div>${ic('phone', 34, 34)}0561731860</div></div></div>
<div class="row act pink"><span>${ic('calX', 34)}Annulue Rendez-Vous</span><span>${ic('calEdit', 34)}Edit Rendez-Vous</span></div>
<div class="row pat"><span style="width:680px">${ic('person', 84)}<span><b>Le Nom De La Patient</b><br>ZAKARIA BOURAOUI</span></span><span style="gap:15px">${ic('phone', 72, 70)}<span><b>Phone</b><br>0561731111</span></span></div>
<div class="row ana"><b>Analyse Choisis</b><ul><li>Complete Blood Count (CBC)</li></ul></div>
<div class="row cost"><div><span class="pink">Cost Detaile :</span><span class="v" style="margin-right:14px">Prix</span></div><div><span style="padding-left:7px">Complete Blood Count (CBC)</span><span class="v">122.00  $</span></div><div style="margin-top:5px"><span class="pink" style="gap:11px;margin-left:-6px">${ic('calc', 40, 42)}<span style="margin-left:-4px">Total Cost :</span></span><span class="v">122.00  $</span></div></div>
<div class="row pay pink"><span>${ic('card', 40, 42)}<span>Methode De Payment</span></span><span>Carte Debit</span></div>
<div class="row end pink">${ic('alert', 43, 43)}<span>Conseign Et Information</span>${ic('thinRight', 46, 50)}</div></div></div>`);

define('screen-figure', `:host{padding-top:var(--top)}.w{margin-left:var(--wx)}
.c{margin:var(--gap) 0 0 var(--cx,0px);font:400 66px/81px Inter,sans-serif;color:#000}`,
h => `<div class="w"><slot></slot></div><div class="c">${h.getAttribute('lines').split('|').map(l => { const [t, w] = l.split('~'); return `<fit-line w="${w}">${t}</fit-line>`; }).join('')}</div>`);

const fig = (top, wx, gap, cx, lines, body) => `<screen-figure style="--top:${top}px;--wx:${wx}px;--gap:${gap}px;--cx:${cx}px" lines="${lines}">${body}</screen-figure>`;
const win = (body, chrome = '', app = '', over = '') => `<browser-window><browser-chrome path="/patient/book_appointment/" ${chrome}></browser-chrome><lab-app ${app}>${body}${over}</lab-app></browser-window>`;
define('flow-board', `:host{zoom:.68270;width:4857px;height:6000px;display:flex;align-items:flex-start;background:#fff;overflow:hidden;font-family:"Liberation Sans",Arial,sans-serif}
.l{width:2508px;padding-left:293px;flex:none}.r{flex:1}
.bar{position:absolute;right:0;top:0;width:2.500px;height:422px;background:#777;border-radius:0 0 2px 2px}
.detail{width:1790px;height:1402px;outline-color:#555}
.z{zoom:1.036;--inset:6.400px;--rin:10px;--urlw:963px;--shift:-6.500px}`,
`<div class="l">
${fig(262, 81.5, 156, 1, 'Prendre Rendez-Vous (A) Choisir Laboratoire Et Date Heur~1845', win('<lab-search></lab-search>', '', 'tall scrolls', '<div slot="over" class="bar"></div>'))}
${fig(160, 81.5, 155.5, 1, 'Prendre Rendez-Vous (C) Choisir Motif~1227', win('<wizard-step><choice-card heading="Choose Your Consultation Purpose" options="Blood Test|Blood Donation"></choice-card></wizard-step>'))}
${fig(160.5, 81.5, 156.5, 1, 'Prendre Rendez-Vous (E) Confirmé   Date Heur~1482', win('<wizard-step high><confirm-card></confirm-card></wizard-step>'))}
${fig(159.5, 81.5, 71.5, 1, 'Prendre Rendez-Vous (G) Payment~1102', win('<wizard-step high pay><payment-card></payment-card></wizard-step>', 'key'))}
</div><div class="r">
${fig(271, 57.5, 54, 3, 'Prendre Rendez-Vous (B) Choisir Rendez-Vous Type~1654', win('<wizard-step one><choice-card heading="Choose Type Of Consultation" options="In The Laboratory|At Home"></choice-card></wizard-step>', 'queue', 'badge="26"'))}
${fig(157, 109.5, 26.5, 58, 'Prendre Rendez-Vous (D) Choisir Analyse Type~1487', win('<wizard-step bold><analysis-card></analysis-card></wizard-step>'))}
${fig(155, 109.5, 27, 58, 'Prendre Rendez-Vous (F) Accepte Les Term Et  Lue  Les~1774|Consegin~300', win('<wizard-step high><blank-card></blank-card></wizard-step>', '', '', '<read-dialog slot="over"></read-dialog>'))}
${fig(74.5, 108.5, 69.5, 58, 'Prendre Rendez-Vous (H)Rendez-Vous Detaille~1482', `<browser-window class="detail"><browser-chrome class="z" small uw="423" path="/patient/detaille_appointments/244/"></browser-chrome><lab-app class="z" tall nosupport badge="26"><visit-detail></visit-detail></lab-app></browser-window>`)}
</div>`);
</script>
</body>
</html>
